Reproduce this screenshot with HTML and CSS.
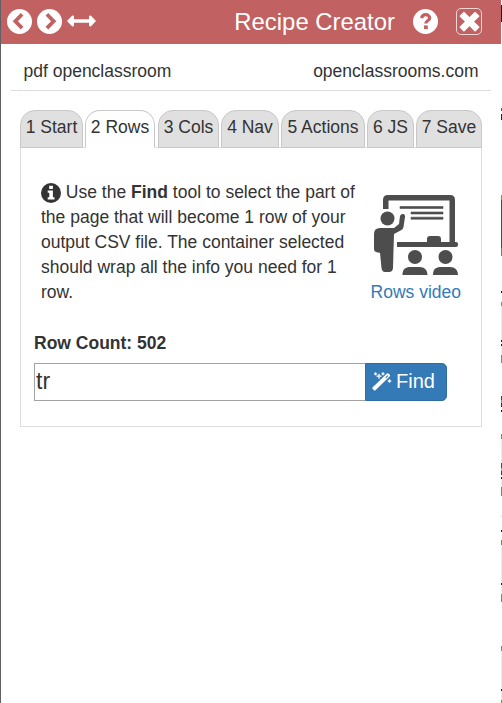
FILE: index.html
```html
<!DOCTYPE html>
<html lang="en">
<head>
<meta charset="utf-8">
<title>Recipe Creator</title>
<link rel="stylesheet" href="styles.css">
</head>
<body>
<div class="app">
  <main class="window">
    <header class="header">
      <svg class="round" viewBox="0 0 24 24"><circle cx="12" cy="12" r="12" fill="#fff"/><path d="M14.500 5 8 11.700l6.500 6.700" class="chevron"/></svg>
      <svg class="round next" viewBox="0 0 24 24"><circle cx="12" cy="12" r="12" fill="#fff"/><path d="M9.500 5 16 11.700l-6.500 6.700" class="chevron"/></svg>
      <svg class="resize" viewBox="0 0 29 12"><path d="M0 6 5 .8Q7 0 7 2v2.200h15V2q0-2 2-1.200L29 6l-5 5.200q-2 .8-2-1.200V7.800H7V10q0 2-2 1.200z" fill="#fff"/></svg>
      <h1 class="title">Recipe Creator</h1>
      <svg class="help" viewBox="0 0 24 24"><circle cx="12" cy="12" r="12" fill="#fff"/><path d="M8.200 8.800c.5-2.300 1.900-3.300 4-3.300 2.100 0 3.800 1.300 3.800 3.100 0 2.700-3.700 2.700-3.700 5.200" class="question"/><path d="M10.500 15.800h3.700v3.500h-3.700z" fill="#c16161"/></svg>
      <button class="close" aria-label="Close"><svg viewBox="0 0 20 20"><path d="M4.700 1.200 10 6.500l5.300-5.300 3.700 3.700-5.300 5.200 5.300 5.300-3.700 3.700-5.300-5.300-5.300 5.300L1 15.400l5.300-5.300L1 4.900z" fill="#fff" stroke="#fff" stroke-linejoin="round"/></svg></button>
    </header>
    <div class="meta"><span>pdf openclassroom</span><span>openclassrooms.com</span></div>
    <nav class="tabs">
      <a class="tab start">1 Start</a><a class="tab rows active">2 Rows</a><a class="tab cols">3 Cols</a><a class="tab nav">4 Nav</a><a class="tab actions">5 Actions</a><a class="tab js">6 JS</a><a class="tab save">7 Save</a>
    </nav>
    <section class="panel">
      <div class="intro">
        <p class="description"><svg class="info" viewBox="0 0 20 20"><circle cx="10" cy="10" r="10" fill="#333"/><path d="M8.200 2.700h3.700v3.200H8.200zM6.700 7.500h5.200v6.700h1.600v2.300H6.700v-2.300h1.600V9.800H6.700z" fill="#fff"/></svg> Use the <b>Find</b> tool to select the part of<br>the page that will become 1 row of your<br>output CSV file. The container selected<br>should wrap all the info you need for 1<br>row.</p>
        <a class="video">
          <svg class="lesson" viewBox="0 0 84 80" fill="#4d4d4d"><path d="M9 14V5q0-5 5-5h62q5 0 5 5v42h1q2 0 2 2v1q0 2-2 2H23v-5h30v-3q0-3 3-3h8q3 0 3 3v3h8.500V5.500H14.500V14z"/><path d="M26 11.500h43v2H26zM37 17h32v2H37zM37 22.200h32v2H37z" stroke="#4d4d4d" stroke-width=".6"/><circle cx="13.500" cy="23.500" r="7"/><path d="M6 33h14l5-4 1-8q1-2.500 3.300-2 2.200.5 1.700 3l-1.500 10q-.4 2-2 3L20 39l-1 34q-.3 4-4 4H11q-3 0-3.500-4L6 58l-4-1q-2-.5-2-3V39q0-6 6-6z"/><circle cx="41" cy="62" r="7"/><circle cx="71.500" cy="62" r="7"/><path d="M28.500 80c0-6 3-8 8-8h9c5 0 8 3 8 8zM59 80c0-6 3-8 8-8h9c5 0 8 3 8 8z"/></svg>
          <span>Rows video</span>
        </a>
      </div>
      <div class="count">Row Count: 502</div>
      <div class="finder">
        <input class="selector" value="tr" aria-label="Row selector">
        <button class="find"><svg class="wand" viewBox="0 0 20 19"><path d="m.7 15.200 14-13.500q1-1 2.100 0l.8.800q1 1 0 2.100L3.700 18q-1 1-2 0l-1-1q-.8-.9 0-1.800z" fill="#fff"/><path d="m13.300 5.500 2.200-2.200.7.700L14 6.200z" fill="#337ab7"/><path d="M3.500.3v3M2 1.800h3M7 1.800v5M4.500 4.200h5M11 .3v3M9.500 1.800h3M17.500 7.300v3.400M15.800 9h3.400" stroke="#fff" stroke-width="1.300"/></svg>Find</button>
      </div>
    </section>
  </main>
  <div class="page-edge"></div>
</div>
</body>
</html>
```

FILE: styles.css
```css
* { box-sizing: border-box; }
body { margin: 0; background: #fff; color: #333; font: 17.5px/25px "Liberation Sans", Arial, sans-serif; overflow: hidden; }
svg { display: block; flex: none; }
.app { display: flex; height: 703px; }
.window { width: 501px; border-left: 1px solid #606064; }
.page-edge {
  width: 1px;
  background: linear-gradient(
    #fff 5px, #24191a 5px 22px, #fff 22px 108px, #3768a8 108px 111px, #fff 111px 114px, #18233d 114px 120px,
    #fff 120px 195px, #58a957 195px 200px, #4b4b54 200px 248px, #4ba04b 248px 256px, #fff 256px 282px, #ffffd9 282px 284px,
    #fff 284px 291px, #181818 291px 293px, #fff 293px 302px, #61a958 302px 306px, #eee 306px 340px, #222 340px 342px,
    #eee 342px 344px, #222 344px 346px, #eee 346px 355px, #54a354 355px 363px, #fff 363px 396px, #31475c 396px 400px,
    #6c9bc1 400px 403px, #342e2b 403px 407px, #fff 407px 410px, #17202c 410px 412px, #fff 412px 434px, #59a354 434px 439px,
    #eee 439px 463px, #344e65 463px 468px, #91b8dc 468px 471px, #463d35 471px 475px, #fff 475px 477px, #222 477px 479px,
    #eee 479px 487px, #54a354 487px 496px, #fff 496px 516px, #bfe5f2 516px 517px, #fff 517px 530px, #222 530px 532px,
    #fff 532px 540px, #54a354 540px 545px, #eee 545px 583px, #222 583px 585px, #eee 585px 594px, #54a354 594px 602px,
    #fff 602px 646px, #54a354 646px 651px, #eee 651px 689px, #222 689px 691px, #eee 691px 700px, #54a354 700px);
}
.header { display: flex; align-items: center; height: 44px; padding: 0 19px 2px 6px; background: #c16161; color: #fff; }
.round { width: 25px; height: 25px; }
.next { margin-left: 5px; }
.chevron { fill: none; stroke: #c16161; stroke-width: 3.6; }
.resize { width: 29px; height: 12px; margin-left: 5px; }
.title { margin: 0 18px 0 auto; font-size: 23.9px; line-height: 30px; font-weight: 400; padding-top: 1px; }
.help { width: 25px; height: 25px; }
.question { fill: none; stroke: #c16161; stroke-width: 3.1; }
.close { display: grid; place-items: center; width: 26px; height: 27px; margin-left: 18px; padding: 0; border: 1px solid #eed4d4; border-radius: 5px; background: transparent; }
.close svg { width: 21px; height: 21px; }
.meta { display: flex; justify-content: space-between; height: 47px; margin: 0 10px; padding: 15px 12.500px 0; border-bottom: 1px solid #ddd; }
.tabs { display: flex; gap: 2px; position: relative; width: 462px; height: 38px; margin: 19px 0 -1px 19px; }
.tab { height: 38px; padding-top: 4px; border: 1px solid #c8c8c8; border-radius: 15px 15px 0 0; background: #e0e0e0; text-align: center; white-space: nowrap; }
.tab.active { background: #fff; border-bottom-color: #fff; }
.start { width: 63px; }
.rows { width: 70px; }
.cols { width: 61px; margin-left: 1px; }
.nav { width: 58px; }
.actions { width: 84px; }
.js { width: 47px; }
.save { width: 66px; }
.panel { width: 462px; height: 280px; margin-left: 19px; padding: 32px 13px 0; border: 1px solid #ddd; }
.intro { display: flex; justify-content: space-between; padding: 0 7px; }
.description { margin: 0; white-space: nowrap; }
.info { display: inline-block; width: 20px; height: 20px; vertical-align: -5px; }
.video { display: flex; flex-direction: column; align-items: center; color: #337ab7; }
.lesson { width: 84px; height: 80px; margin: 15px 0 5px; }
.count { margin-top: 26px; font-weight: 700; }
.finder { display: flex; margin-top: 7px; }
.selector { width: 331px; height: 38px; padding: 0 1px 2px; border: 1px solid #a2a2a2; border-right: 0; outline: 0; color: #333; font: 23px/30px "Liberation Sans", Arial, sans-serif; }
.find { display: flex; align-items: center; width: 82px; height: 38px; padding: 0 0 2px 6px; border: 1px solid #2e6da4; border-radius: 0 5px 5px 0; background: #337ab7; color: #fff; font: 20px/28px "Liberation Sans", Arial, sans-serif; }
.wand { width: 20px; height: 19px; margin-right: 4px; }
```
